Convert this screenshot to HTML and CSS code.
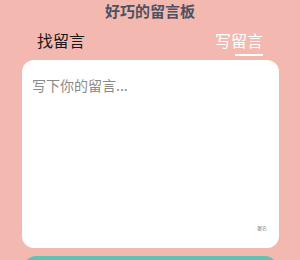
FILE: index.html
```html
<!DOCTYPE html>
<html lang="zh-CN">
<head>
<meta charset="utf-8">
<link rel="stylesheet" href="styles.css">
</head>
<body>
<div class="page">
  <div class="title">好巧的留言板</div>
  <div class="tabs">
    <div class="tab">找留言</div>
    <div class="tab active">写留言</div>
  </div>
  <div class="card">
    <div class="input">写下你的留言...</div>
    <div class="footer"><span class="sign">署名</span></div>
  </div>
  <div class="button"></div>
</div>
</body>
</html>
```
FILE: styles.css
```css
html, body {
  margin: 0;
  padding: 0;
  background: #f3b8b0;
  font-family: "Noto Sans CJK SC", "Noto Sans", sans-serif;
}
.page {
  width: 300px;
  height: 260px;
  overflow: hidden;
  display: flex;
  flex-direction: column;
}
.page > * {
  flex-shrink: 0;
}
.title {
  height: 22px;
  line-height: 22px;
  text-align: center;
  font-size: 15px;
  font-weight: 700;
  color: #4b5262;
}
.tabs {
  height: 38px;
  display: flex;
  justify-content: space-between;
  padding: 0 37px;
}
.tab {
  position: relative;
  font-size: 16px;
  line-height: 36px;
  color: #1a1a1a;
}
.tab.active {
  color: #ffffff;
}
.tab.active::after {
  content: "";
  position: absolute;
  right: 0;
  top: 32px;
  width: 28px;
  height: 2px;
  background: #ffffff;
}
.card {
  margin: 0 21px 0 22px;
  height: 188px;
  background: #ffffff;
  border-radius: 12px;
  box-sizing: border-box;
  padding: 15px 12px 16px 10px;
  display: flex;
  flex-direction: column;
}
.input {
  flex: 1;
  font-size: 14px;
  line-height: 20px;
  color: #8a8a8a;
}
.footer {
  display: flex;
  justify-content: flex-end;
}
.sign {
  font-size: 5px;
  line-height: 8px;
  color: #888888;
}
.button {
  margin: 8px 23px 0 24px;
  height: 30px;
  background: #5cc4b0;
  border-radius: 12px;
}
```
